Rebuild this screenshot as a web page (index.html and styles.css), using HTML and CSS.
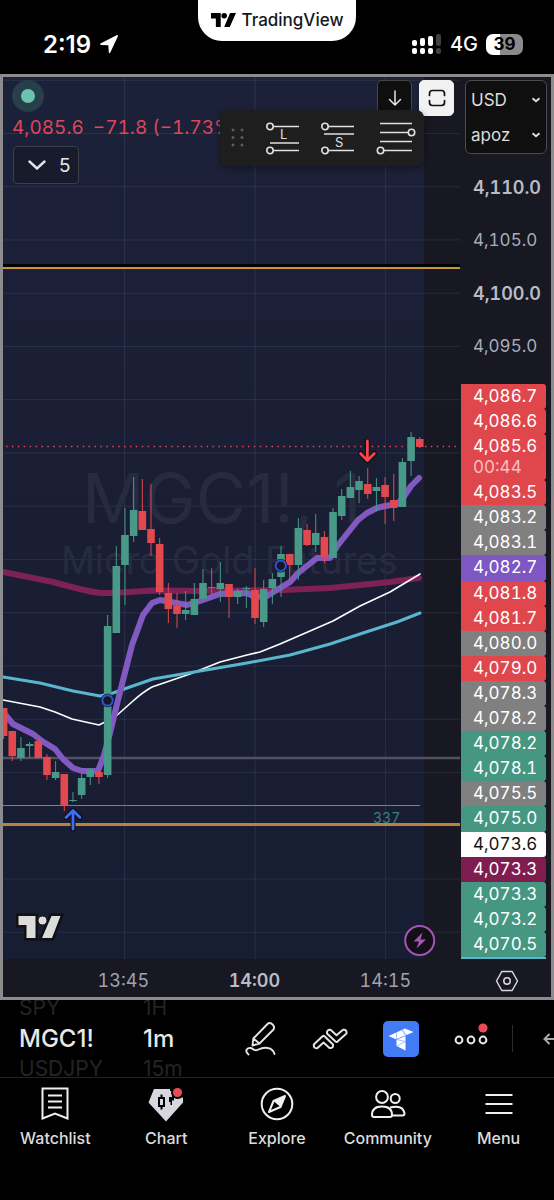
FILE: index.html
```
<!DOCTYPE html>
<html lang="en">
<head>
  <meta charset="UTF-8">
  <meta name="viewport" content="width=device-width, initial-scale=1.0">
  <title>MGC1! - TradingView</title>
  <link rel="stylesheet" href="styles.css">
</head>
<body>

  <header class="status-bar">
    <div class="status-left">
      <span class="clock">2:19</span>
      <svg width="20" height="20" viewBox="0 0 20 20"><path d="M1.5 9.6 17.6 1.2q1.8-.6 1.2 1.2L11.3 18.6q-1 1.2-1.5-.3L9.300 11.2 2 11q-1.8-.4-.5-1.4z" fill="#fff"/></svg>
    </div>
    <div class="app-pill">
      <svg width="25" height="14" viewBox="0 0 36 20"><path d="M14 20H7V8H0V0h14zM27 20h-8L27.500 0H36z"/><circle cx="19" cy="4" r="4"/></svg>
      <span>TradingView</span>
    </div>
    <div class="status-right">
      <svg width="30" height="22" viewBox="0 0 30 22">
        <g fill="#fff">
          <rect x="0" y="7" width="5" height="6" rx="2"/><rect x="8" y="5" width="5" height="8" rx="2"/><rect x="16" y="3" width="5" height="10" rx="2"/>
          <rect x="0" y="15" width="5" height="6" rx="2"/><rect x="8" y="15" width="5" height="6" rx="2"/><rect x="16" y="15" width="5" height="6" rx="2"/>
        </g>
        <g fill="#404040"><rect x="24" y="1" width="5" height="12" rx="2"/><rect x="24" y="15" width="5" height="6" rx="2"/></g>
      </svg>
      <span class="network">4G</span>
      <span class="battery">39</span>
    </div>
  </header>

  <main class="chart-panel">
    <div class="plot">
      <svg class="plot-svg" viewBox="3 77 457 882" role="img" aria-label="Micro Gold Futures, 1 minute">
        <defs>
          <linearGradient id="session" x1="0" y1="0" x2="0" y2="1">
            <stop offset="0" stop-color="#1c213a"/>
            <stop offset="0.5" stop-color="#1a1e34"/>
            <stop offset="1" stop-color="#171d33"/>
          </linearGradient>
        </defs>
        <rect x="3" y="77" width="421" height="882" fill="url(#session)"/>
        <g id="grid" class="grid"></g>
        <g class="watermark">
          <text x="82" y="523" font-size="69">MGC1!, 1</text>
          <text x="61" y="574" font-size="37.500">Micro Gold Futures</text>
        </g>

        <path d="M3 265.500H460" stroke="#000" stroke-width="3"/>
        <path d="M3 268H460" stroke="#c9953f" stroke-width="2"/>
        <path d="M3 758H460" stroke="#50525e" stroke-width="2.500"/>
        <path d="M3 805.500H420" stroke="#479b8b" stroke-width="1"/>
        <path d="M3 824.500H460" stroke="#b8843a" stroke-width="3"/>
        <text class="volume" x="373" y="823">337</text>
        <path d="M6 446.500H460" stroke="#d4485c" stroke-width="1.500" stroke-dasharray="1.500 4.400"/>

        <g class="average">
          <path d="M3 572 53 582Q85 591 100 593H113L153 590.500 200 591 283 590 330 588 390 582 419 578" stroke="#7e2156" stroke-width="6"/>
          <path d="M3 700 40 707 55 712 72 719 99 725 115 717 133 701Q143 692 152 687L190 674 220 662 247 655 260 652 280 644 310 631 333 621 360 606 390 592 420 574" stroke="#fff" stroke-width="1.600"/>
          <path d="M3 677 40 683 73 691 100 696 113 693 127 688 153 679 200 671 247 663 290 655 330 644 363 633 397 622 420 613" stroke="#5ab6cc" stroke-width="3"/>
          <path d="M3 712 13 724 33 734 42 741 55 749 63 759 73 768 82 771H98L104 755 110 733 118 700 132 645 143 615 152 603 160 600 187 605 200 601 220 594 247 593 255 597 267 596 275 591 290 582 298 573 317 558H330L338 545 358 520 367 513 377 508 385 506 397 504 403 498 411 486 419 478" stroke="#8159c0" stroke-width="6"/>
        </g>
        <g id="candles"></g>

        <g class="marker">
          <circle cx="107.500" cy="700.500" r="6.800"/><circle cx="280.700" cy="565.700" r="6.800"/>
          <circle class="ring" cx="107.500" cy="700.500" r="5.200"/><circle class="ring" cx="280.700" cy="565.700" r="5.200"/>
        </g>
        <g fill="none" stroke-linecap="round" stroke-linejoin="round">
          <path d="M367.400 441V460M360.500 453.500 367.400 460.500 374.300 453.500" stroke="#0c0d12" stroke-width="5"/>
          <path d="M367.400 441V460M360.500 453.500 367.400 460.500 374.300 453.500" stroke="#f04a4a" stroke-width="2.800"/>
          <path d="M73 829V811M66 817.500 73 810.500 80 817.500" stroke="#0c0d12" stroke-width="5"/>
          <path d="M73 829V811M66 817.500 73 810.500 80 817.500" stroke="#3d6df5" stroke-width="2.800"/>
        </g>

        <g transform="translate(18.500 916)">
          <path d="M0 0H17V22H8V9H0zM33 0H42L33.500 22H23.500z" fill="#111" stroke="#111" stroke-width="5"/>
          <path d="M0 0H17V22H8V9H0zM33 0H42L33.500 22H23.500z" fill="#dcdcdc"/>
          <circle cx="24" cy="4.500" r="4.500" fill="#dcdcdc" stroke="#111"/>
        </g>
        <circle cx="419.700" cy="940.500" r="14.500" fill="#121016" stroke="#a555b5" stroke-width="2"/>
        <path d="M422.500 932.500 413.500 941.500H419L416.500 948.500 426 939.500H420.500z" fill="#a555b5"/>
      </svg>

      <div class="legend">
        <span class="market-dot"></span>
        <div class="quote"><span>4,085.6</span> <span>−71.8 (−1.73%)</span></div>
        <button class="indicators" type="button">
          <svg width="18" height="10" viewBox="0 0 18 10" fill="none" stroke="#e4e4e8" stroke-width="2.400" stroke-linecap="round"><path d="M1.500 1.500 9 8.500 16.500 1.500"/></svg>
          5
        </button>
      </div>

      <div class="plot-buttons">
        <button class="plot-button" type="button" aria-label="Scroll down">
          <svg width="18" height="20" viewBox="0 0 18 20" fill="none" stroke="#e6e6e6" stroke-width="1.500" stroke-linecap="round" stroke-linejoin="round"><path d="M9 3V17M3.500 11.500 9 17 14.500 11.500"/></svg>
        </button>
        <button class="plot-button light" type="button" aria-label="Fullscreen">
          <svg width="18" height="18" viewBox="0 0 18 18" fill="none" stroke="#111" stroke-width="1.700" stroke-linecap="round"><path d="M1.500 6.500V4.500Q1.500 1.500 4.500 1.500H13.500Q16.500 1.500 16.500 4.500V6.500M1.500 11.500V13.500Q1.500 16.500 4.500 16.500H13.500Q16.500 16.500 16.500 13.500V11.500"/></svg>
        </button>
      </div>

      <div class="drawing-tools">
        <svg width="14" height="20" viewBox="0 0 14 20" fill="#5c5c5c"><circle cx="2" cy="2" r="1.500"/><circle cx="11" cy="2" r="1.500"/><circle cx="2" cy="9.500" r="1.500"/><circle cx="11" cy="9.500" r="1.500"/><circle cx="2" cy="17" r="1.500"/><circle cx="11" cy="17" r="1.500"/></svg>
        <button type="button" aria-label="Long position">
          <svg width="36" height="34" viewBox="0 0 36 34"><path d="M8 5.500H34M5 22H34M8 29.500H34"/><circle cx="5" cy="5.500" r="3.200"/><circle cx="5" cy="29.500" r="3.200"/><text x="15" y="18">L</text></svg>
        </button>
        <button type="button" aria-label="Short position">
          <svg width="36" height="34" viewBox="0 0 36 34"><path d="M8 5.500H34M4 13H34M8 29.500H34"/><circle cx="5" cy="5.500" r="3.200"/><circle cx="5" cy="29.500" r="3.200"/><text x="15" y="26">S</text></svg>
        </button>
        <button type="button" aria-label="Fib retracement">
          <svg width="40" height="34" viewBox="0 0 40 34"><path d="M4 2.500H36M4 11.500H32M4 20.500H36M8 29.500H36"/><circle cx="35.500" cy="11.500" r="3.200"/><circle cx="4.500" cy="29.500" r="3.200"/></svg>
        </button>
      </div>
    </div>

    <div class="price-axis">
      <div class="units">
        <label class="unit">
          <select aria-label="Currency"><option>USD</option></select>
          <svg width="10" height="6" viewBox="0 0 10 6"><path d="M1.500 1.200 5 4.200 8.500 1.200"/></svg>
        </label>
        <label class="unit">
          <select aria-label="Unit"><option>apoz</option></select>
          <svg width="10" height="6" viewBox="0 0 10 6"><path d="M1.500 1.200 5 4.200 8.500 1.200"/></svg>
        </label>
      </div>
      <ul class="scale">
        <li class="major">4,110.0</li>
        <li>4,105.0</li>
        <li class="major">4,100.0</li>
        <li>4,095.0</li>
      </ul>
      <ul class="tags">
        <li class="red">4,086.7</li>
        <li class="red">4,086.6</li>
        <li class="red last-price">4,085.6<span>00:44</span></li>
        <li class="red">4,083.5</li>
        <li class="gray">4,083.2</li>
        <li class="gray">4,083.1</li>
        <li class="purple">4,082.7</li>
        <li class="red">4,081.8</li>
        <li class="red">4,081.7</li>
        <li class="gray">4,080.0</li>
        <li class="red">4,079.0</li>
        <li class="gray">4,078.3</li>
        <li class="gray">4,078.2</li>
        <li class="green">4,078.2</li>
        <li class="green">4,078.1</li>
        <li class="gray">4,075.5</li>
        <li class="green">4,075.0</li>
        <li class="white">4,073.6</li>
        <li class="maroon">4,073.3</li>
        <li class="green">4,073.3</li>
        <li class="green">4,073.2</li>
        <li class="green">4,070.5</li>
      </ul>
    </div>

    <div class="time-axis">
      <span>13:45</span>
      <span class="major">14:00</span>
      <span>14:15</span>
    </div>
    <button class="axis-settings" type="button" aria-label="Chart settings">
      <svg width="24" height="22" viewBox="0 0 24 22" fill="none" stroke="#d8d8dc" stroke-width="1.500" stroke-linejoin="round"><path d="M6.800 1.500H17.200L22.500 11 17.200 20.500H6.800L1.500 11z"/><circle cx="12" cy="11" r="3.200"/></svg>
    </button>
  </main>

  <div class="toolbar">
    <div class="wheel symbol">
      <span>SPY</span>
      <button type="button">MGC1!</button>
      <span>USDJPY</span>
    </div>
    <div class="wheel interval">
      <span>1H</span>
      <button type="button">1m</button>
      <span>15m</span>
    </div>
    <div class="tools">
      <button type="button" aria-label="Draw">
        <svg width="32" height="36" viewBox="0 0 32 36" fill="none" stroke="#e4e4e4" stroke-width="1.900" stroke-linecap="round" stroke-linejoin="round"><path d="M7.500 24.500 8.300 17.500 22.500 3Q24.500 1 27.300 3.300T28.500 8.500L14.500 22.500zM8.300 17.500 14.500 22.500M3.500 33.500C-.5 30.500 1.500 26.500 5.500 27S8.500 31 13.500 28.500 27.500 25.500 29.500 33"/></svg>
      </button>
      <button type="button" aria-label="Indicators">
        <svg width="36" height="24" viewBox="0 0 36 24" fill="none" stroke="#e4e4e4" stroke-width="2" stroke-linecap="round" stroke-linejoin="round"><path d="M1.800 17.500 10.500 9.300Q11.500 8.500 12.500 9.300L21 17.500Q21.500 21.500 17.500 21L11.500 15.500 5.500 21Q1.500 22 1.800 17.500zM15 6.500Q14.500 2.500 18.500 2.800L24.500 8.300 31 2.800Q35 2 34.500 6.500L25.500 14.600Q24.500 15.300 23.500 14.500z"/></svg>
      </button>
      <button class="featured" type="button" aria-label="Favorite tool">
        <svg width="26" height="24" viewBox="0 0 26 24" fill="#fff"><path d="M.5 9 17 1.500 25.500 5 17.500 8.500V23.500L8.500 19V12.500z"/><path d="M8.500 5.500V12.500L17.500 8.500 14 3 19 8M8.500 19 17.500 14.500 8.500 12.500 17.500 8.500" fill="none" stroke="#6f9af8" stroke-width=".6"/></svg>
      </button>
      <button type="button" aria-label="More">
        <svg width="34" height="36" viewBox="0 0 34 36" fill="none" stroke="#e8e8e8" stroke-width="2"><circle cx="5" cy="19" r="3.400"/><circle cx="17" cy="19" r="3.400"/><circle cx="29" cy="19" r="3.400"/><circle cx="29" cy="7" r="4.600" fill="#ea4a55" stroke="none"/></svg>
      </button>
    </div>
    <button class="undo" type="button" aria-label="Undo">
      <svg width="11" height="12" viewBox="0 0 11 12" fill="none" stroke="#a8a8a8" stroke-width="2" stroke-linecap="round"><path d="M6 1.500 1.500 6 6 10.500M2 6H11"/></svg>
    </button>
  </div>

  <nav class="bottom-nav">
    <a href="#watchlist">
      <svg width="36" height="36" viewBox="0 0 36 36" fill="none" stroke="#f0f0f0" stroke-width="2"><path d="M5.500 2.500H30.500V32.500L18 27.500 5.500 32.500zM11 9.500H25M11 15.500H25M11 21.500H25"/></svg>
      Watchlist
    </a>
    <a href="#chart">
      <svg width="36" height="36" viewBox="0 0 36 36"><path d="M6 3H22V5H26V11.500H35V16.500L18 35.500.500 16.500z" fill="#d6d7e0"/><path d="M11 12H16V20H11zM13.500 8.500V12M13.500 20V23.500" fill="none" stroke="#000" stroke-width="2"/><path d="M21 11H24V9.500H26V14.500H24V19H22.500V16H21z" fill="#000"/><circle cx="29.500" cy="6.500" r="6.500" fill="#000"/><circle cx="29.500" cy="6.500" r="4.600" fill="#ea4a55"/></svg>
      Chart
    </a>
    <a href="#explore">
      <svg width="36" height="36" viewBox="0 0 36 36" fill="none" stroke="#f0f0f0" stroke-width="2" stroke-linejoin="round"><circle cx="18" cy="18" r="15.300"/><path d="M26 10 21.500 21 10 26 14.500 15z"/><path d="M26 10 14.500 15 21.500 21z" fill="#f0f0f0" stroke="none"/></svg>
      Explore
    </a>
    <a href="#community">
      <svg width="36" height="36" viewBox="0 0 36 36" fill="none" stroke="#f0f0f0" stroke-width="2" stroke-linejoin="round"><circle cx="12" cy="11" r="5.900"/><circle cx="25.200" cy="12.500" r="4.500"/><path d="M2 29Q2 20.500 12 20.500T22 29Q22 31 20 31H4Q2 31 2 29zM20 21.500Q33 18.500 34.500 27.500 34.500 29.500 32.500 29.500H22"/></svg>
      Community
    </a>
    <a href="#menu">
      <svg width="36" height="36" viewBox="0 0 36 36" fill="none" stroke="#f0f0f0" stroke-width="2"><path d="M4.500 9H31.500M4.500 18H31.500M4.500 27H31.500"/></svg>
      Menu
    </a>
  </nav>

  <script src="chart.js"></script>
</body>
</html>
```
FILE: styles.css
```
* {
  margin: 0;
  padding: 0;
  box-sizing: border-box;
}

body {
  min-height: 100vh;
  background-color: #000;
  color: #e8e8e8;
  font-family: Inter, "Liberation Sans", sans-serif;
}

button {
  border: none;
  background: none;
  color: inherit;
  font: inherit;
  cursor: pointer;
}

svg {
  display: block;
  flex-shrink: 0;
}

ul {
  list-style: none;
}

/* Status bar */
.status-bar {
  display: grid;
  grid-template-columns: 1fr 158px 1fr;
  height: 74px;
  color: #fff;
}

.status-left,
.status-right {
  display: flex;
  align-items: center;
  padding-top: 14px;
}

.status-left {
  gap: 8px;
  padding-left: 43px;
}

.clock {
  font-size: 24px;
  font-weight: 600;
}

.app-pill {
  display: flex;
  align-items: center;
  justify-content: center;
  gap: 6px;
  height: 41px;
  padding-bottom: 2px;
  border-radius: 0 0 24px 24px;
  background-color: #fff;
  color: #131722;
  font-size: 17px;
  font-weight: 500;
}

.status-right {
  justify-content: flex-end;
  gap: 8px;
  padding-right: 31px;
}

.network {
  font-size: 20px;
  font-weight: 500;
}

.battery {
  width: 37px;
  border-radius: 7px;
  background: linear-gradient(90deg, #fff 39%, #8a8a8a 39%);
  color: #000;
  font-size: 17px;
  font-weight: 700;
  line-height: 21px;
  text-align: center;
}

/* Chart */
.chart-panel {
  display: grid;
  grid-template-columns: 1fr 91px;
  border: 3px solid #8c8c8c;
  background-color: #171822;
  font-variant-numeric: tabular-nums;
}

.plot {
  position: relative;
}

.plot-svg {
  width: 100%;
  height: auto;
}

.grid {
  stroke: #a0a8c8;
  stroke-opacity: 0.13;
}

.watermark {
  fill: #272b40;
  font-variant-numeric: normal;
}

.volume {
  fill: #3d7f7a;
  font-size: 14px;
}

.average {
  fill: none;
  stroke-linecap: round;
  stroke-linejoin: round;
}

.marker {
  fill: #0c0d14;
}

.marker .ring {
  fill: #141726;
  stroke: #2f55d4;
  stroke-width: 2;
}

.up {
  fill: #489987;
  stroke: #489987;
}

.down {
  fill: #e2484e;
  stroke: #e2484e;
}

.legend {
  position: absolute;
  top: 3px;
  left: 9px;
}

.market-dot {
  display: block;
  width: 32px;
  height: 32px;
  border: 9px solid #263f4a;
  border-radius: 50%;
  background-color: #6ac3ae;
}

.quote {
  display: flex;
  gap: 9px;
  margin-bottom: 2px;
  color: #dc4659;
  font-size: 19px;
  line-height: 32px;
  white-space: nowrap;
}

.indicators {
  display: flex;
  align-items: center;
  justify-content: space-between;
  width: 66px;
  height: 38px;
  margin-left: 1px;
  padding: 0 7px 0 14px;
  border: 1px solid #3c3e48;
  border-radius: 4px;
  background-color: #181b2b;
  font-size: 19px;
}

.plot-buttons {
  position: absolute;
  top: 3px;
  right: 6px;
  display: flex;
  gap: 7px;
}

.plot-button {
  display: grid;
  place-items: center;
  width: 35px;
  height: 36px;
  border: 1px solid #45454c;
  border-radius: 5px;
  background-color: #0f0f0f;
}

.plot-button.light {
  border-color: #f2f2f2;
  background-color: #f2f2f2;
}

.drawing-tools {
  position: absolute;
  top: 33px;
  right: 36px;
  display: flex;
  align-items: center;
  justify-content: space-between;
  width: 204px;
  height: 56px;
  padding: 0 8px 0 11px;
  border-radius: 8px;
  background-color: #1e1e1e;
  box-shadow: 0 2px 6px rgba(0, 0, 0, 0.4);
}

.drawing-tools button svg {
  fill: none;
  stroke: #e0e0e0;
  stroke-width: 1.6;
}

.drawing-tools text {
  fill: #e0e0e0;
  stroke: none;
  font-size: 13px;
}

.price-axis {
  display: flex;
  flex-direction: column;
  font-size: 17px;
}

.units {
  margin: 3px 4px 7px 5px;
  padding: 1px 5px;
  border: 1px solid #4a4a50;
  border-radius: 6px;
  background-color: #0f0f0f;
}

.unit {
  display: flex;
  align-items: center;
  height: 35px;
}

.unit select {
  flex: 1;
  min-width: 0;
  border: none;
  background: none;
  color: #dcdcdc;
  font: inherit;
  appearance: none;
}

.unit svg {
  fill: none;
  stroke: #e0e0e0;
  stroke-width: 1.8;
  pointer-events: none;
}

.scale {
  margin-bottom: 11px;
  color: #a9acb8;
}

.scale li {
  padding-left: 13px;
  line-height: 53px;
}

.scale .major {
  color: #b9bbc6;
  font-size: 18px;
  font-weight: 600;
}

.tags {
  flex: 1;
  display: flex;
  flex-direction: column;
  margin: 0 5px 0 1px;
  border-bottom: 2px solid #5ab6cc;
  color: #fff;
}

.tags li {
  flex: 1;
  padding-left: 12px;
  border-radius: 0 3px 3px 0;
  line-height: 25px;
}

.tags .last-price {
  flex: 0 0 46px;
}

.last-price span {
  display: block;
  color: #f6bfc1;
  line-height: 17px;
}

.red {
  background-color: #e0474d;
}

.gray {
  background-color: #808080;
}

.purple {
  background-color: #7e57c2;
}

.green {
  background-color: #459782;
}

.maroon {
  background-color: #801d50;
}

.tags .white {
  background-color: #fff;
  color: #131313;
}

.time-axis {
  display: grid;
  grid-template-columns: repeat(3, 1fr);
  height: 38px;
  padding: 3px 2% 0 12%;
  color: #a0a3ae;
  font-size: 18px;
  line-height: 38px;
  text-align: center;
}

.time-axis .major {
  color: #b9bbc6;
  font-weight: 600;
}

.axis-settings {
  display: grid;
  place-items: center;
  padding: 6px 0 0 2px;
}

/* Symbol toolbar */
.toolbar {
  display: flex;
  height: 78px;
  border-bottom: 1px solid #242424;
}

.wheel {
  display: flex;
  flex-direction: column;
  justify-content: space-between;
  height: 77px;
  overflow: hidden;
}

.wheel span {
  color: #242424;
  font-size: 21px;
  line-height: 16px;
}

.wheel button {
  font-size: 24px;
  font-weight: 500;
  line-height: 32px;
  text-align: left;
}

.symbol {
  width: 143px;
  padding-left: 19px;
}

.interval {
  width: 84px;
}

.tools {
  flex: 1;
  display: flex;
  align-items: center;
  justify-content: space-around;
  padding-right: 7px;
}

.tools .featured {
  display: grid;
  place-items: center;
  width: 36px;
  height: 36px;
  border-radius: 5px;
  background-color: #437af5;
}

.undo {
  margin: 25px 0;
  padding-left: 30px;
  border-left: 1px solid #2c2c2c;
}

/* Bottom navigation */
.bottom-nav {
  display: grid;
  grid-template-columns: repeat(5, 1fr);
  padding-top: 8px;
}

.bottom-nav a {
  display: flex;
  flex-direction: column;
  align-items: center;
  gap: 6px;
  color: #dcdcdc;
  font-size: 16px;
  font-weight: 500;
  line-height: 20px;
  text-decoration: none;
}
```
FILE: chart.js
```
const SVG_NS = "http://www.w3.org/2000/svg";
const CANDLE_STEP = 8.67;
const BODY_WIDTH = 7.6;

// [direction, high, body top, body bottom, low]
const candles = [
  ["down", 708, 708, 736, 739],
  ["down", 731, 731, 756, 761],
  ["up", 737, 748, 758, 761],
  ["up", 742, 744, 746, 758],
  ["down", 738, 741, 758, 758],
  ["down", 754, 757, 775, 780],
  ["up", 761, 772, 778, 780],
  ["down", 774, 774, 805, 811],
  ["up", 792, 800, 801, 802],
  ["up", 774, 778, 795, 799],
  ["up", 768, 770, 777, 785],
  ["down", 770, 772, 777, 784],
  ["up", 615, 626, 775, 778],
  ["up", 546, 566, 633, 633],
  ["up", 508, 535, 565, 605],
  ["up", 477, 510, 536, 542],
  ["down", 479, 511, 530, 530],
  ["down", 484, 529, 543, 556],
  ["down", 538, 544, 592, 595],
  ["down", 583, 593, 609, 623],
  ["down", 593, 606, 614, 628],
  ["up", 591, 610, 614, 620],
  ["up", 583, 599, 615, 615],
  ["up", 569, 583, 599, 599],
  ["down", 568, 587, 588, 594],
  ["up", 562, 583, 589, 602],
  ["down", 584, 584, 597, 618],
  ["up", 589, 591, 597, 604],
  ["up", 586, 588, 589, 608],
  ["down", 568, 590, 618, 624],
  ["up", 580, 589, 622, 627],
  ["up", 573, 579, 588, 604],
  ["up", 546, 554, 577, 597],
  ["down", 554, 554, 565, 582],
  ["up", 518, 528, 565, 580],
  ["down", 524, 530, 545, 546],
  ["up", 514, 533, 545, 552],
  ["down", 531, 537, 557, 563],
  ["up", 508, 512, 558, 558],
  ["up", 489, 496, 516, 520],
  ["up", 471, 487, 498, 498],
  ["up", 476, 481, 490, 503],
  ["down", 468, 484, 494, 499],
  ["up", 478, 487, 491, 511],
  ["down", 477, 485, 497, 524],
  ["down", 474, 500, 508, 521],
  ["up", 458, 462, 507, 507],
  ["up", 432, 437, 461, 476],
  ["down", 437, 439, 447, 448]
];

function add(parent, tag, attributes) {
  const element = document.createElementNS(SVG_NS, tag);
  for (const name in attributes) {
    element.setAttribute(name, attributes[name]);
  }
  parent.appendChild(element);
}

function drawGrid() {
  const grid = document.getElementById("grid");
  for (let i = 0; i < 17; i++) {
    add(grid, "path", { d: `M3 ${80.2 + i * 53.25}H460` });
  }
  [124.6, 255, 385.4].forEach(x => add(grid, "path", { d: `M${x} 77V959` }));
}

function drawCandles() {
  const group = document.getElementById("candles");
  candles.forEach(([direction, high, top, bottom, low], i) => {
    const x = 3.6 + i * CANDLE_STEP;
    add(group, "path", { class: direction, d: `M${x} ${high}V${low}` });
    add(group, "rect", {
      class: direction,
      "stroke-width": 0,
      x: x - BODY_WIDTH / 2,
      y: top,
      width: BODY_WIDTH,
      height: bottom - top
    });
  });
}

drawGrid();
drawCandles();
```
